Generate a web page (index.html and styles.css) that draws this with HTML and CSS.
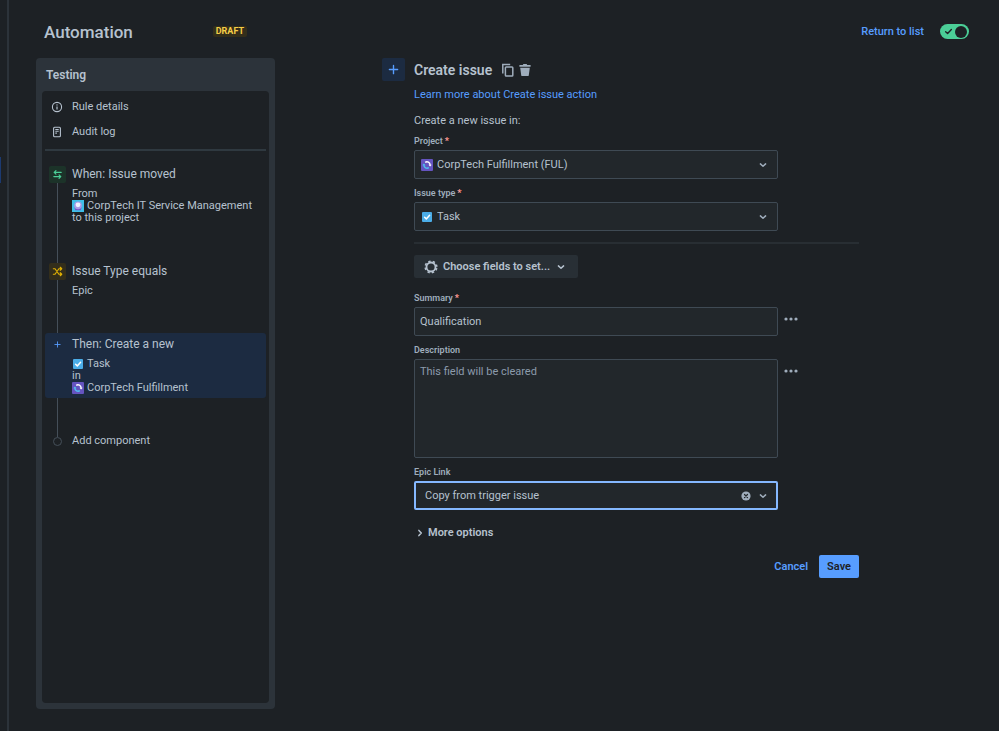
FILE: index.html
```
<!DOCTYPE html>
<html lang="en">
<head>
  <meta charset="UTF-8">
  <meta name="viewport" content="width=device-width, initial-scale=1.0">
  <title>Automation - Testing</title>
  <link rel="stylesheet" href="styles.css">
</head>
<body>
  <!-- shared icons -->
  <svg class="sprite" aria-hidden="true">
    <symbol id="chevron" viewBox="0 0 12 12">
      <path d="M3.4 4.9 6 7.3 8.6 4.9" fill="none" stroke="currentColor" stroke-width="1.5" stroke-linecap="round" stroke-linejoin="round"/>
    </symbol>
    <symbol id="plus" viewBox="0 0 12 12">
      <path d="M6 1.5v9M1.5 6h9" fill="none" stroke="currentColor" stroke-width="1.5" stroke-linecap="round"/>
    </symbol>
    <symbol id="dots" viewBox="0 0 14 6">
      <circle cx="2" cy="3" r="1.6"/><circle cx="7" cy="3" r="1.6"/><circle cx="12" cy="3" r="1.6"/>
    </symbol>
    <symbol id="task" viewBox="0 0 12 12">
      <rect x="1" y="1" width="10" height="10" rx="1" fill="#4bade8"/>
      <path d="M3.6 6.2 5.3 7.9 8.6 4.2" fill="none" stroke="#fff" stroke-width="1.5" stroke-linecap="round" stroke-linejoin="round"/>
    </symbol>
    <symbol id="fulfillment" viewBox="0 0 12 12">
      <rect width="12" height="12" rx="1" fill="#6554c0"/>
      <path d="M4.2 3.4A3.1 3.1 0 0 1 9.1 6" fill="none" stroke="#fff" stroke-width="1.4"/>
      <path d="M7.8 8.6A3.1 3.1 0 0 1 2.9 6" fill="none" stroke="#4fc3f0" stroke-width="1.4"/>
      <path d="M7.5 5.8h3.2L9.1 7.6z" fill="#fff"/>
      <path d="M1.3 6.2h3.2L2.9 4.4z" fill="#4fc3f0"/>
    </symbol>
    <symbol id="service" viewBox="0 0 12 12">
      <rect width="12" height="12" fill="#3fbfe8"/>
      <path d="M2.4 7.2h7.2l-.8 3H3.2z" fill="#7a55c8"/>
      <circle cx="6" cy="5.4" r="3.8" fill="#a99be8"/>
      <circle cx="6" cy="4.8" r="2.4" fill="#eef2ff"/>
    </symbol>
  </svg>

  <nav class="rail" aria-label="Settings"></nav>

  <div class="page">
    <header class="topbar">
      <div class="heading">
        <h1>Automation</h1>
        <span class="badge">Draft</span>
      </div>
      <a href="#" class="link">Return to list</a>
      <label class="toggle">
        <input type="checkbox" checked aria-label="Rule enabled">
        <svg viewBox="0 0 10 10"><path d="M1.8 5.2 4 7.3 8.2 2.8" fill="none" stroke="#1d2125" stroke-width="1.5" stroke-linecap="round" stroke-linejoin="round"/></svg>
      </label>
    </header>

    <div class="content">
      <aside class="sidebar">
        <h2>Testing</h2>
        <div class="rule">
          <ul class="menu">
            <li><a href="#">
              <svg viewBox="0 0 12 12"><circle cx="6" cy="6" r="4.6" fill="none" stroke="currentColor" stroke-width="1.1"/><circle cx="6" cy="3.9" r=".7" fill="currentColor"/><path d="M6 5.5v3" stroke="currentColor" stroke-width="1.2"/></svg>
              Rule details
            </a></li>
            <li><a href="#">
              <svg viewBox="0 0 12 12"><rect x="2.6" y="1.2" width="6.8" height="9.6" rx="1" fill="none" stroke="currentColor" stroke-width="1.1"/><path d="M4.3 3.5h3.4M4.3 5.3h3.4M4.3 7.1h1.6" stroke="currentColor" stroke-width="1.1"/></svg>
              Audit log
            </a></li>
          </ul>

          <ol class="steps">
            <li>
              <a href="#" class="step">
                <span class="marker green">
                  <svg viewBox="0 0 12 12"><path d="M10 3.7H2.4M4.3 1.8 2.4 3.7l1.9 1.9M2 8.3h7.6M7.7 6.4l1.9 1.9-1.9 1.9" fill="none" stroke="currentColor" stroke-width="1.3" stroke-linecap="round" stroke-linejoin="round"/></svg>
                </span>
                <span class="step-text">
                  <strong>When: Issue moved</strong>
                  <span>From</span>
                  <span><svg><use href="#service"/></svg>CorpTech IT Service Management</span>
                  <span>to this project</span>
                </span>
              </a>
            </li>
            <li>
              <a href="#" class="step">
                <span class="marker yellow">
                  <svg viewBox="0 0 12 12"><path d="M1.5 3h1.8l4.2 6h2.9M1.5 9h1.8l1.3-1.9M6.2 4.9 7.5 3h2.9M9 1.4 10.6 3 9 4.6M9 7.4 10.6 9 9 10.6" fill="none" stroke="currentColor" stroke-width="1.3" stroke-linecap="round" stroke-linejoin="round"/></svg>
                </span>
                <span class="step-text">
                  <strong>Issue Type equals</strong>
                  <span>Epic</span>
                </span>
              </a>
            </li>
            <li>
              <a href="#" class="step selected" aria-current="step">
                <span class="marker blue"><svg><use href="#plus"/></svg></span>
                <span class="step-text">
                  <strong>Then: Create a new</strong>
                  <span><svg><use href="#task"/></svg>Task</span>
                  <span>in</span>
                  <span><svg><use href="#fulfillment"/></svg>CorpTech Fulfillment</span>
                </span>
              </a>
            </li>
            <li>
              <button type="button" class="add"><i></i>Add component</button>
            </li>
          </ol>
        </div>
      </aside>

      <main class="editor">
        <div class="editor-icon"><svg><use href="#plus"/></svg></div>
        <form class="editor-body">
          <div class="editor-title">
            <h2>Create issue</h2>
            <button type="button" aria-label="Duplicate">
              <svg viewBox="0 0 14 14"><path d="M1.8 10.6V1.6h7.4" fill="none" stroke="currentColor" stroke-width="1.5"/><rect x="4.4" y="3.9" width="7.4" height="9.1" rx=".8" fill="none" stroke="currentColor" stroke-width="1.5"/></svg>
            </button>
            <button type="button" aria-label="Delete">
              <svg viewBox="0 0 14 14"><path d="M1.4 2.1h3.4L5.4 1h3.2l.6 1.1h3.4v1.6H1.4z" fill="currentColor"/><path d="M2.2 4.7h9.6l-1 7.5q-.1.9-1 .9H4.2q-.9 0-1-.9z" fill="currentColor"/></svg>
            </button>
          </div>
          <a href="#" class="link learn">Learn more about Create issue action</a>
          <p>Create a new issue in:</p>

          <div class="field">
            <label for="project">Project<b>*</b></label>
            <div class="box">
              <svg><use href="#fulfillment"/></svg>
              <select id="project"><option>CorpTech Fulfillment (FUL)</option></select>
              <svg><use href="#chevron"/></svg>
            </div>
          </div>
          <div class="field">
            <label for="type">Issue type<b>*</b></label>
            <div class="box">
              <svg><use href="#task"/></svg>
              <select id="type"><option>Task</option></select>
              <svg><use href="#chevron"/></svg>
            </div>
          </div>

          <hr>

          <button type="button" class="choose">
            <svg viewBox="0 0 14 14"><circle cx="7" cy="7" r="4.5" fill="none" stroke="currentColor" stroke-width="1.8"/><circle cx="7" cy="7" r="5.8" fill="none" stroke="currentColor" stroke-width="1.6" stroke-dasharray="2.3 2.255" stroke-dashoffset="-1.1"/></svg>
            Choose fields to set...
            <svg class="small"><use href="#chevron"/></svg>
          </button>

          <div class="field">
            <label for="summary">Summary<b>*</b></label>
            <input id="summary" class="box" type="text" value="Qualification">
            <button type="button" class="more" aria-label="Summary actions"><svg><use href="#dots"/></svg></button>
          </div>
          <div class="field">
            <label for="description">Description</label>
            <textarea id="description" class="box" placeholder="This field will be cleared"></textarea>
            <button type="button" class="more" aria-label="Description actions"><svg><use href="#dots"/></svg></button>
          </div>
          <div class="field">
            <label for="epic">Epic Link</label>
            <div class="box focused">
              <select id="epic"><option>Copy from trigger issue</option></select>
              <button type="button" class="clear" aria-label="Clear">
                <svg viewBox="0 0 12 12"><circle cx="6" cy="6" r="4.6" fill="currentColor"/><path d="m4.5 4.5 3 3m0-3-3 3" stroke="#22272b" stroke-width="1.2" stroke-linecap="round"/></svg>
              </button>
              <svg><use href="#chevron"/></svg>
            </div>
          </div>

          <button type="button" class="options"><svg><use href="#chevron"/></svg>More options</button>

          <div class="actions">
            <button type="button" class="cancel">Cancel</button>
            <button type="submit" class="save">Save</button>
          </div>
        </form>
      </main>
    </div>
  </div>
</body>
</html>
```

FILE: styles.css
```
* {
  box-sizing: border-box;
}

body {
  display: flex;
  min-height: 100vh;
  margin: 0;
  background: #1d2125;
  color: #b6c2cf;
  font-family: Roboto, "Liberation Sans", sans-serif;
  font-size: 11px;
  line-height: 16px;
}

h1, h2, p, ul, ol {
  margin: 0;
  padding: 0;
}

ul, ol {
  list-style: none;
}

a {
  color: inherit;
  text-decoration: none;
}

button, input, select, textarea {
  margin: 0;
  padding: 0;
  border: 0;
  background: none;
  color: inherit;
  font: inherit;
}

button {
  cursor: pointer;
}

svg {
  display: block;
  flex: none;
  width: 12px;
  height: 12px;
}

.sprite {
  position: absolute;
  width: 0;
  height: 0;
}

.rail {
  flex: none;
  width: 9px;
  border-right: 2px solid #2c333a;
}

.rail::before {
  content: "";
  display: block;
  width: 1px;
  height: 26px;
  margin-top: 157px;
  background: #1c3a70;
}

.page {
  flex: 1;
  display: flex;
  flex-direction: column;
  padding: 5px 30px 22px 27px;
}

/* top bar */
.topbar {
  display: flex;
  align-items: center;
  height: 53px;
}

.heading {
  display: flex;
  align-items: center;
  justify-content: space-between;
  width: 211px;
  padding-left: 8px;
  margin-right: auto;
}

h1 {
  font-size: 17px;
  font-weight: 500;
  line-height: 24px;
}

.badge {
  padding: 0 3px;
  border-radius: 2px;
  background: #332e1b;
  color: #f5cd47;
  font-size: 9px;
  font-weight: 700;
  line-height: 11px;
  text-transform: uppercase;
}

.link {
  color: #579dff;
  font-weight: 500;
}

.toggle {
  display: flex;
  align-items: center;
  justify-content: space-between;
  width: 29px;
  height: 15px;
  margin-left: 16px;
  padding: 0 2px 0 4px;
  border-radius: 8px;
  background: #4bce97;
}

.toggle input {
  appearance: none;
  order: 2;
  width: 12px;
  height: 12px;
  border-radius: 50%;
  background: #1d2125;
}

.toggle svg {
  width: 9px;
  height: 9px;
}

.content {
  flex: 1;
  display: flex;
}

/* sidebar */
.sidebar {
  flex: none;
  display: flex;
  flex-direction: column;
  width: 239px;
  padding: 0 6px 6px;
  border-radius: 4px;
  background: #2c333a;
}

.sidebar h2 {
  padding: 9px 4px 8px;
  font-size: 12px;
  font-weight: 600;
}

.rule {
  flex: 1;
  padding: 3px;
  border-radius: 4px;
  background: #1d2125;
}

.menu {
  padding-bottom: 5px;
  border-bottom: 2px solid #2f3940;
}

.menu a {
  display: flex;
  align-items: center;
  gap: 9px;
  height: 25px;
  padding-left: 6px;
}

.steps {
  padding-top: 12px;
}

.steps li {
  position: relative;
  padding-bottom: 32px;
}

.steps li:not(:last-child)::before {
  content: "";
  position: absolute;
  top: 20px;
  bottom: -7px;
  left: 12px;
  width: 1px;
  background: #454f59;
}

.step {
  position: relative;
  display: flex;
  gap: 6px;
  padding: 3px 4px 4px;
  border-radius: 3px;
}

.selected {
  background: #1c2b41;
}

.marker {
  display: grid;
  place-items: center;
  flex: none;
  width: 17px;
  height: 17px;
  border-radius: 2px;
}

.marker svg {
  width: 11px;
  height: 11px;
}

.green { background: #1c3329; color: #4bce97; }
.yellow { background: #332e1b; color: #e2b203; }
.blue { color: #579dff; }

.marker.blue svg {
  width: 7px;
  height: 7px;
}

.step-text strong {
  display: block;
  margin-bottom: 6px;
  font-size: 12px;
  font-weight: 400;
}

.step-text span {
  display: flex;
  align-items: center;
  gap: 3px;
  line-height: 12px;
  white-space: nowrap;
}

.add {
  position: relative;
  display: flex;
  align-items: center;
  gap: 10px;
  height: 22px;
  padding-left: 8px;
}

.add i {
  width: 9px;
  height: 9px;
  border: 1px solid #454f59;
  border-radius: 50%;
  background: #1d2125;
}

/* editor */
.editor {
  flex: 1;
  display: flex;
  gap: 9px;
  padding: 0 110px 0 107px;
}

.editor-icon {
  display: grid;
  place-items: center;
  flex: none;
  width: 23px;
  height: 23px;
  border-radius: 2px;
  background: #1c2b41;
  color: #579dff;
}

.editor-icon svg {
  width: 11px;
  height: 11px;
}

.editor-body {
  flex: 1;
  min-width: 0;
}

.editor-title {
  display: flex;
  align-items: center;
  gap: 3px;
  height: 23px;
  margin-bottom: 6px;
}

.editor-title h2 {
  margin-right: 6px;
  font-size: 14px;
  font-weight: 600;
}

.editor-title button {
  color: #9fadbc;
}

.editor-title svg {
  width: 14px;
  height: 14px;
}

.learn {
  display: block;
  font-weight: 400;
}

.editor p {
  margin: 10px 0 6px;
}

.field {
  display: grid;
  grid-template-columns: 1fr 75px;
  column-gap: 6px;
  row-gap: 3px;
  margin-bottom: 8px;
}

.field label {
  grid-column: 1 / -1;
  color: #9fadbc;
  font-size: 9px;
  font-weight: 600;
  line-height: 12px;
}

.field b {
  padding-left: 2px;
  color: #fd9891;
}

.box {
  display: flex;
  align-items: center;
  gap: 4px;
  width: 100%;
  height: 29px;
  padding: 0 8px 0 6px;
  border: 1px solid #3f4a54;
  border-radius: 2px;
  background: #22272b;
}

input.box, textarea.box {
  padding-left: 5px;
}

textarea.box {
  display: block;
  height: 99px;
  padding-top: 4px;
  resize: none;
}

.box::placeholder {
  color: #8c9bab;
  opacity: 1;
}

.box svg {
  color: #9fadbc;
}

.box select {
  flex: 1;
  min-width: 0;
  appearance: none;
}

.focused {
  padding: 0 7px 0 9px;
  border: 2px solid #85b8ff;
}

.clear {
  margin-right: 1px;
}

.more {
  align-self: start;
  width: 14px;
  height: 24px;
}

.more svg {
  width: 14px;
  height: 6px;
  fill: #9fadbc;
}

.editor hr {
  height: 2px;
  margin: 11px 0;
  border: 0;
  background: #282e33;
}

.choose {
  display: flex;
  align-items: center;
  gap: 5px;
  height: 23px;
  margin-bottom: 14px;
  padding: 0 11px 0 10px;
  border-radius: 2px;
  background: #282f35;
  font-weight: 600;
}

.choose svg {
  width: 14px;
  height: 14px;
}

.choose .small {
  width: 12px;
  height: 12px;
}

.options {
  display: flex;
  align-items: center;
  gap: 2px;
  margin-top: 15px;
  font-weight: 600;
}

.options svg {
  transform: rotate(-90deg);
}

.actions {
  display: flex;
  justify-content: flex-end;
  gap: 3px;
  margin-top: 14px;
}

.actions button {
  height: 23px;
  padding: 0 8px;
  border-radius: 2px;
  font-weight: 600;
}

.cancel {
  color: #579dff;
}

.save {
  background: #579dff;
  color: #1d2125;
}
```
